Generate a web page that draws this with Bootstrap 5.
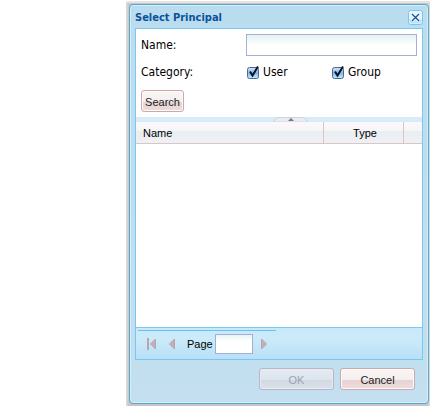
<!DOCTYPE html>
<html lang="en">
<head>
<meta charset="utf-8">
<meta name="viewport" content="width=device-width, initial-scale=1">
<title>Select Principal</title>
<link href="https://cdn.jsdelivr.net/npm/bootstrap@5.3.0/dist/css/bootstrap.min.css" rel="stylesheet">
<style>
body { background: #fff; color: #000; padding: 1px 7px 0 126px; font: 12px/16px "DejaVu Sans Condensed", "Noto Sans", sans-serif; }
.backdrop-area { background: linear-gradient(90deg, #dedede 0, #c6c6c6 3px, #c6c6c6 calc(100% - 3px), #dcdcdc 100%); border-top: 2px solid #e5e5e5; padding: 1px 1px 2px 3px; }
.dialog { border: 1px solid #5ba7cb; border-radius: 4px; background: linear-gradient(#b9ddef, #c3dff0); box-shadow: inset 0 0 0 1px #d5eef8; padding: 5px 5px 13px 5px; }
.dialog-title { font-size: 11px; line-height: 16px; font-weight: 700; color: #0c519c; margin: 0; }
.title-row { height: 18px; }
.close-btn { width: 15px; height: 15px; padding: 0; border: 0; background: none; line-height: 0; }
.panel { border: 1px solid #78c8f2; }
.search-form { background: #fff; padding: 5px; }
.label-col { width: 105px; }
.name-input { height: 22px; border: 1px solid #a5afd5; border-radius: 0; padding: 0 4px; background: linear-gradient(#e3f3f3, #fff 10px); font-size: 12px; }
.category-row { height: 32px; margin-bottom: 2px; }
.option { width: 85px; }
.tick { appearance: none; width: 12px; height: 14px; margin: 0 4px 0 1px; background: url("data:image/svg+xml,%3Csvg xmlns='http://www.w3.org/2000/svg' viewBox='0 0 12 14'%3E%3Cdefs%3E%3ClinearGradient id='g' x2='0' y2='1'%3E%3Cstop stop-color='%23d5e7f7'/%3E%3Cstop offset='.5' stop-color='%2381b7e9'/%3E%3Cstop offset='1' stop-color='%23b9f3ff'/%3E%3C/linearGradient%3E%3C/defs%3E%3Crect x='.5' y='2.5' width='11' height='11' rx='2' fill='url(%23g)' stroke='%23566490'/%3E%3C/svg%3E"); }
.tick:checked { background-image: url("data:image/svg+xml,%3Csvg xmlns='http://www.w3.org/2000/svg' viewBox='0 0 12 14'%3E%3Cdefs%3E%3ClinearGradient id='g' x2='0' y2='1'%3E%3Cstop stop-color='%23d5e7f7'/%3E%3Cstop offset='.5' stop-color='%2381b7e9'/%3E%3Cstop offset='1' stop-color='%23b9f3ff'/%3E%3C/linearGradient%3E%3C/defs%3E%3Crect x='.5' y='2.5' width='11' height='11' rx='2' fill='url(%23g)' stroke='%23566490'/%3E%3Cpath d='M3 6.5L5.5 10.5L11 1.5' fill='none' stroke='%23081528' stroke-width='2'/%3E%3C/svg%3E"); }
.soft-btn { font: 11px/18px "Liberation Sans", Arial, sans-serif; height: 22px; padding: 1px 0 0; border: 1px solid #cda9ab; border-radius: 3px; background: linear-gradient(#fbf7f7, #f4eeee 55%, #e5d3d2 56%, #ecdedd); box-shadow: inset 0 0 0 1px #fffafa; color: #222; }
.search-btn { width: 43px; }
.action-btn { width: 75px; }
.soft-btn:disabled { color: #98a3ae; opacity: 1; border-color: #c2b3c2; background: linear-gradient(#e3eaf1, #dce5ee 55%, #d2d9e2 56%, #d9e1ea); box-shadow: inset 0 0 0 1px #e3edf4; }
.splitter { height: 5px; background: #d8ebf8; border: 0; padding: 0; line-height: 0; }
.splitter svg { margin-left: 23px; }
.results { background: #fff; min-height: 205px; }
.results-table { font: 11px/20px "Liberation Sans", Arial, sans-serif; color: #000; table-layout: fixed; border-collapse: separate; border-spacing: 0; }
.results-table th { font-weight: 400; height: 22px; padding: 1px 7px 0; border-bottom: 1px solid #ddc4c6; border-right: 1px solid #e2c1c2; background: linear-gradient(#fbf9fb, #f7f5f8 40%, #e9eef2 45%, #eef1f4); }
.results-table th:last-child { border-right: 0; }
.results-table .type-col { width: 80px; padding: 1px 4px 0 7px; }
.extra-col { width: 18px; }
.pager { border-top: 1px solid #78c8f2; height: 32px; background: linear-gradient(#c9e9f9, #cbebf9 10px, #b9dff7); padding: 2px 2px 2px; }
.pager-tools { border-top: 1px solid #66c3f0; width: 138px; height: 27px; padding-left: 8px; font: 11px/16px "Liberation Sans", Arial, sans-serif; }
.page-input { width: 38px; height: 20px; border: 1px solid #a5afd5; border-radius: 0; background: linear-gradient(#e8f4f4, #fff 6px); padding: 0 3px; font-size: 11px; }
.page-nav { border: 0; padding: 0; background: none; line-height: 0; }
.first-gap { margin-right: 12px; }
.prev-gap { margin-right: 11px; }
.page-gap { margin-right: 2px; }
.next-gap { margin-left: 8px; }
.actions { gap: 6px; padding: 8px 8px 0 0; }
</style>
</head>
<body>
<main class="backdrop-area">
  <section class="dialog" role="dialog" aria-labelledby="dlg-title">
    <header class="title-row d-flex justify-content-between align-items-start">
      <h1 class="dialog-title" id="dlg-title">Select Principal</h1>
      <button type="button" class="close-btn" aria-label="Close">
        <svg width="15" height="15" viewBox="0 0 15 15"><rect x=".5" y=".5" width="14" height="14" rx="2" fill="#e5f5fd" stroke="#79c7ef"/><path d="M1.500 9h12v4.500h-12z" fill="#bfe4f7"/><path d="M4 4l7 7M11 4l-7 7" stroke="#fff" stroke-width="3"/><path d="M4 4l7 7M11 4l-7 7" stroke="#1553a2" stroke-width="1.400"/></svg>
      </button>
    </header>
    <div class="panel">
      <form class="search-form">
        <div class="d-flex align-items-center">
          <label class="label-col flex-shrink-0" for="name">Name:</label>
          <input class="form-control name-input" type="text" id="name">
        </div>
        <div class="category-row d-flex align-items-center">
          <span class="label-col flex-shrink-0">Category:</span>
          <div class="option d-flex align-items-center"><input class="tick" type="checkbox" id="user" checked><label for="user">User</label></div>
          <div class="option d-flex align-items-center"><input class="tick" type="checkbox" id="group" checked><label for="group">Group</label></div>
        </div>
        <button type="button" class="btn soft-btn search-btn">Search</button>
      </form>
      <button type="button" class="splitter d-flex justify-content-center w-100" aria-label="Collapse search">
        <svg width="35" height="5" viewBox="0 0 35 5"><path d="M0 5L4 .5H31L35 5z" fill="#e9edf3" stroke="#ccd3df"/><path d="M15 4l3-3 3 3z" fill="#77778f"/></svg>
      </button>
      <div class="results">
        <table class="results-table w-100">
          <thead><tr><th scope="col">Name</th><th scope="col" class="type-col text-center">Type</th><th class="extra-col"></th></tr></thead>
          <tbody></tbody>
        </table>
      </div>
      <div class="pager">
        <div class="pager-tools d-flex align-items-center">
          <button type="button" class="page-nav first-gap" aria-label="First page"><svg width="11" height="12" viewBox="0 0 11 12"><path d="M1 0h2v12h-2z" fill="#b9a4b1"/><path d="M9.500 1v10L4.500 6z" fill="#c7acb4" stroke="#b9a4b1"/></svg></button>
          <button type="button" class="page-nav prev-gap" aria-label="Previous page"><svg width="7" height="12" viewBox="0 0 7 12"><path d="M5.500 1v10L.5 6z" fill="#c7acb4" stroke="#b9a4b1"/></svg></button>
          <label class="page-gap" for="page">Page</label>
          <input class="page-input" type="text" id="page">
          <button type="button" class="page-nav next-gap" aria-label="Next page"><svg width="7" height="12" viewBox="0 0 7 12"><path d="M.5 1v10L5.500 6z" fill="#c7acb4" stroke="#b9a4b1"/></svg></button>
        </div>
      </div>
    </div>
    <footer class="actions d-flex justify-content-end">
      <button type="button" class="btn soft-btn action-btn" disabled>OK</button>
      <button type="button" class="btn soft-btn action-btn">Cancel</button>
    </footer>
  </section>
</main>
<script src="https://cdn.jsdelivr.net/npm/bootstrap@5.3.0/dist/js/bootstrap.bundle.min.js"></script>
</body>
</html>
